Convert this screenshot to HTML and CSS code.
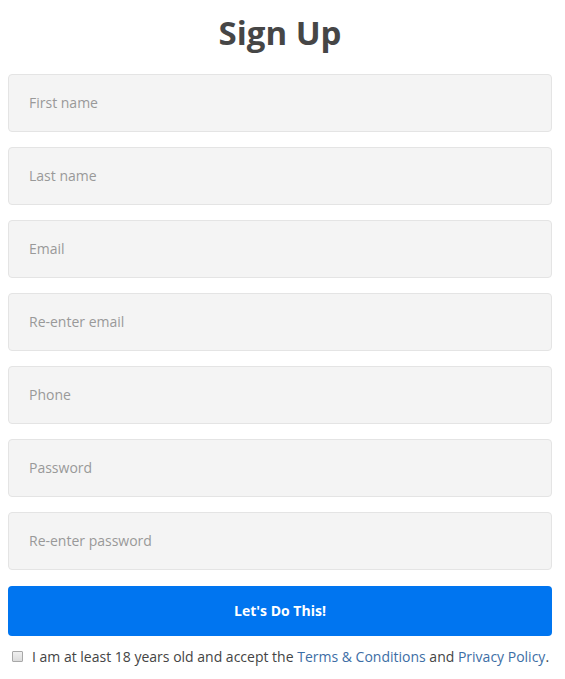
FILE: index.html
```html
<!DOCTYPE html>
<html>
<head>
<meta charset="utf-8">
<link rel="stylesheet" href="styles.css">
</head>
<body>
<form class="signup">
  <h1 class="title">Sign Up</h1>
  <input class="field" type="text" placeholder="First name">
  <input class="field" type="text" placeholder="Last name">
  <input class="field" type="email" placeholder="Email">
  <input class="field" type="email" placeholder="Re-enter email">
  <input class="field" type="tel" placeholder="Phone">
  <input class="field" type="password" placeholder="Password">
  <input class="field" type="password" placeholder="Re-enter password">
  <button class="submit" type="button">Let's Do This!</button>
  <label class="terms">
    <input class="check" type="checkbox">
    <span>I am at least 18 years old and accept the <a class="link" href="#">Terms &amp; Conditions</a> and <a class="link" href="#">Privacy Policy</a>.</span>
  </label>
</form>
</body>
</html>
```
FILE: styles.css
```css
body {
  margin: 8px;
  background: #fff;
  font-family: "Open Sans", "Liberation Sans", sans-serif;
}
.signup {
  width: 544px;
  display: flex;
  flex-direction: column;
  gap: 15px;
}
.title {
  margin: 2px 0 4px;
  text-align: center;
  font-size: 33px;
  font-weight: 700;
  color: #464646;
  line-height: 45px;
}
.field {
  box-sizing: border-box;
  height: 58px;
  width: 100%;
  margin: 0;
  padding: 0 20px 2px;
  border: 1px solid #e4e4e4;
  border-radius: 4px;
  background: #f4f4f4;
  font-family: inherit;
  font-size: 14px;
  color: #444;
}
.field::placeholder {
  color: #999;
}
.submit {
  margin-top: 1px;
  height: 50px;
  padding-bottom: 3px;
  border: none;
  border-radius: 4px;
  background: #0075f0;
  color: #fff;
  font-family: inherit;
  font-size: 14px;
  font-weight: 700;
}
.terms {
  display: flex;
  align-items: center;
  gap: 9px;
  margin-top: -4px;
  font-size: 14px;
  color: #444;
}
.check {
  appearance: none;
  margin: 0 0 0 4px;
  width: 11px;
  height: 11px;
  border: 1px solid #a8a8a8;
  border-radius: 1px;
  background: linear-gradient(#f0f0f0, #dcdcdc);
}
.link {
  color: #3d6ea5;
  text-decoration: none;
}
```
